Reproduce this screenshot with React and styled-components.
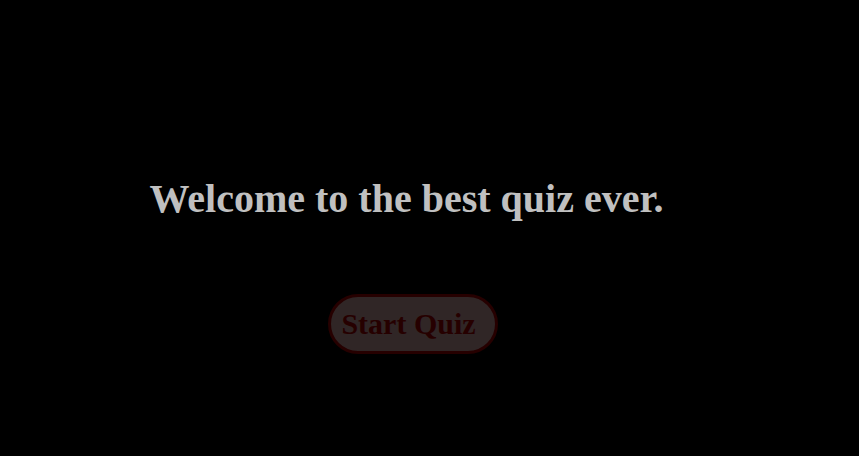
import React from "react";
import styled, { createGlobalStyle } from "styled-components";

const GlobalStyle = createGlobalStyle`
  *, *::before, *::after { box-sizing: border-box; }
  body { margin: 0; background: #000; }
`;

const Page = styled.main`
  min-height: 100vh;
  padding: 175px 46px 0 0;
  display: flex;
  flex-direction: column;
  align-items: center;
  gap: 71px;
  background: #000;
  font-family: "Liberation Serif", "Times New Roman", serif;
`;

const Title = styled.h1`
  margin: 0;
  color: #c0c0c0;
  font-size: 40px;
  line-height: 48px;
  font-weight: 700;
  text-align: center;
`;

const StartButton = styled.button`
  margin-left: 13px;
  padding: 10px 19px 10px 10px;
  border: 3px solid #260000;
  border-radius: 30px;
  background: #302626;
  color: #260000;
  font-family: inherit;
  font-size: 30px;
  line-height: 34px;
  font-weight: 700;
  cursor: pointer;
`;

export default function App() {
  return (
    <>
      <GlobalStyle />
      <Page>
        <Title>Welcome to the best quiz ever.</Title>
        <StartButton type="button">Start Quiz</StartButton>
      </Page>
    </>
  );
}
